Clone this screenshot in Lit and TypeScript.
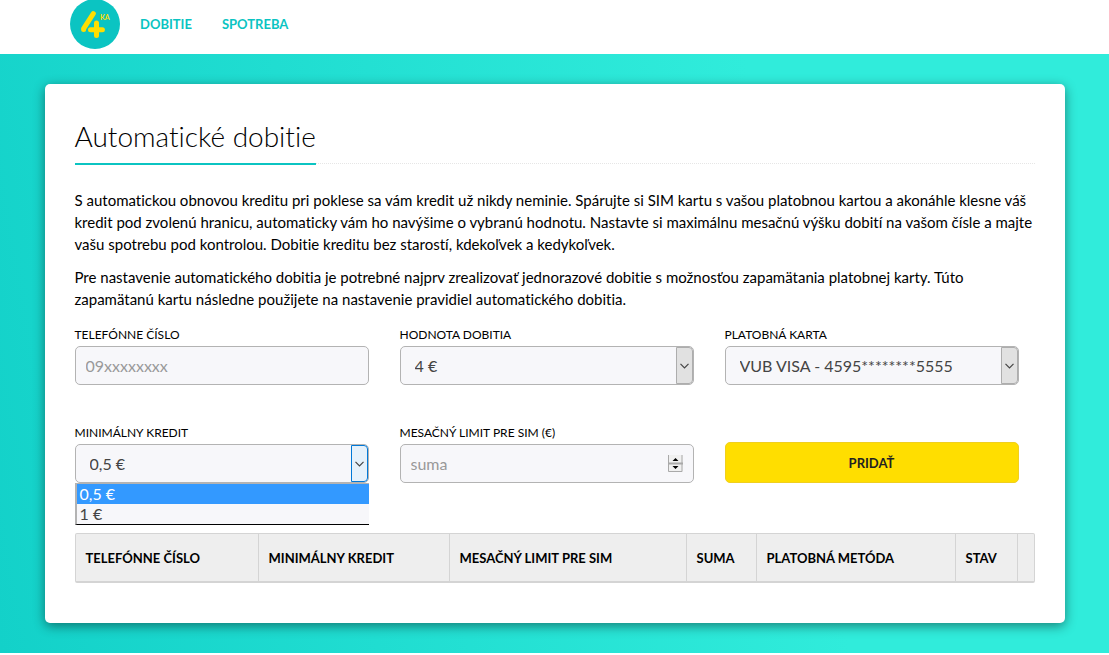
import { LitElement, html, css } from "lit";
import { customElement, state, property } from "lit/decorators.js";

const chevron = html`<svg width="9" height="6" viewBox="0 0 9 6" aria-hidden="true">
  <path d="M0.5 0.8 L4.5 4.8 L8.5 0.8" fill="none" stroke="currentColor" stroke-width="1.2" />
</svg>`;

@customElement("brand-logo")
class BrandLogo extends LitElement {
  static styles = css`
    :host { display: block; width: 50px; height: 50px; }
    svg { display: block; }
    .ka { font: 700 7px Lato, sans-serif; fill: #ffde00; }
  `;
  render() {
    return html`<svg width="50" height="50" viewBox="0 0 50 50" role="img" aria-label="4ka">
      <circle cx="25" cy="25" r="25" fill="#0bc4c2" />
      <g fill="none" stroke="#ffde00" stroke-width="5" stroke-linecap="round" stroke-linejoin="round">
        <path d="M23.3 14.6 L13.6 29.6 V30.6" />
        <path d="M20.5 30.8 H32.4" />
        <path d="M26.5 24 V36.6" />
      </g>
      <text class="ka" x="30" y="21">KA</text>
    </svg>`;
  }
}

@customElement("select-field")
class SelectField extends LitElement {
  @property() label = "";
  @property({ attribute: false }) options: string[] = [];
  @property({ type: Boolean, reflect: true }) open = false;
  @state() private chosen = 0;

  static styles = css`
    :host { display: block; }
    .label { display: block; font-size: 12px; line-height: 14px; margin-bottom: 4px; text-transform: uppercase; }
    .box { position: relative; }
    .select {
      appearance: none; box-sizing: border-box; display: block; width: 100%; height: 39px;
      padding: 0 26px 0 14px; border: 1px solid #b3b3b3; border-radius: 5px;
      background: #f7f7fa; color: #444; font: inherit; font-size: 16px; outline: none;
    }
    .arrow {
      position: absolute; top: 1px; right: 1px; bottom: 1px; width: 17px; box-sizing: border-box;
      display: grid; place-items: center; pointer-events: none;
      background: #e1e1e1; border: 1px solid #adadad; border-radius: 0 4px 4px 0; color: #444;
    }
    :host([open]) .arrow { background: #e5f1fb; border-color: #0078d7; }
    .list {
      position: absolute; z-index: 1; top: 100%; left: 0; right: 0; margin: 0; padding: 0; list-style: none;
      background: #f7f7fa; border: 0 solid #b3b3b3; border-left-width: 2px; border-top-width: 1px;
      border-bottom: 1px solid #000; color: #444; font-size: 16px; line-height: 20px;
    }
    .option { padding: 0 3px; }
    .option.active { background: #3399ff; color: #fff; }
  `;

  render() {
    return html`
      <label class="label" for="field">${this.label}</label>
      <div class="box">
        <select class="select" id="field" @change=${(e: Event) => (this.chosen = (e.target as HTMLSelectElement).selectedIndex)}>
          ${this.options.map((o, i) => html`<option ?selected=${i === this.chosen}>${o}</option>`)}
        </select>
        <span class="arrow">${chevron}</span>
        ${this.open
          ? html`<ul class="list" role="listbox" aria-label=${this.label}>
              ${this.options.map(
                (o, i) => html`<li
                  class="option ${i === this.chosen ? "active" : ""}"
                  role="option"
                  aria-selected=${i === this.chosen ? "true" : "false"}
                  @click=${() => { this.chosen = i; this.open = false; }}
                >${o}</li>`
              )}
            </ul>`
          : null}
      </div>
    `;
  }
}

@customElement("app-root")
class AppRoot extends LitElement {
  static styles = css`
    :host {
      display: block; font-family: Lato, "Open Sans", sans-serif; font-variant-ligatures: none;
      color: #000; background: #fff;
    }
    .header { height: 54px; box-sizing: border-box; padding: 0 70px; display: flex; align-items: flex-start; gap: 20px; }
    .logo { margin-top: -1px; }
    .nav { display: flex; gap: 30px; line-height: 20px; padding-top: 14px; font-size: 13px; font-weight: 700; }
    .nav a { color: #0bc4c2; text-decoration: none; }
    .page { padding: 30px 20px; background: linear-gradient(80deg, #13d1c9 0%, #30ecdb 70%); }
    .card {
      box-sizing: border-box; max-width: 1020px; margin: 0 auto; padding: 35px 30px 40px;
      background: #fff; border-radius: 5px; box-shadow: 0 3px 12px rgba(0, 0, 0, 0.45);
    }
    .heading { display: flex; border-bottom: 1px dotted #e6e6e6; margin-bottom: 25px; }
    .title {
      margin: 0 0 -2px; padding-bottom: 9px; border-bottom: 2px solid #0bc4c2;
      font-size: 28px; line-height: 35px; font-weight: 300;
    }
    .text { margin: 0 0 11px; font-size: 15px; line-height: 22px; }
    .form { display: grid; grid-template-columns: repeat(3, 1fr); gap: 41px 31px; padding-right: 16px; margin-top: 18px; }
    .label { display: block; font-size: 12px; line-height: 14px; margin-bottom: 4px; text-transform: uppercase; }
    .input {
      appearance: textfield; box-sizing: border-box; display: block; width: 100%; height: 39px; padding: 0 10px;
      border: 1px solid #b3b3b3; border-radius: 5px; background: #f7f7fa; color: #444;
      font: inherit; font-size: 16px; outline: none;
    }
    .input::placeholder { color: #999; opacity: 1; }
    .input::-webkit-inner-spin-button { appearance: none; }
    .box { position: relative; }
    .spinner { position: absolute; right: 11px; top: 11px; }
    .submit {
      align-self: end; height: 41px; border: 1px solid #f0cf1f; border-radius: 5px; background: #ffde00;
      color: #222; font: inherit; font-size: 13px; font-weight: 700; cursor: pointer;
    }
    .table {
      width: 100%; table-layout: fixed; border-collapse: separate; border-spacing: 0; margin-top: 50px;
      border: 1px solid #d4d4d4; border-bottom-width: 2px; border-radius: 2px; background: #eee;
    }
    .table th {
      box-sizing: border-box; height: 47px; padding: 0 10px; text-align: left; white-space: nowrap;
      font-size: 13px; font-weight: 700;
    }
    .table th + th, .table td { border-left: 1px solid #d4d4d4; }
    .table td { padding: 0; }
    .c1 { width: 182px; } .c2 { width: 191px; } .c3 { width: 237px; } .c4 { width: 70px; }
    .c5 { width: 199px; } .c6 { width: 62px; } .c7 { width: 17px; }
  `;

  render() {
    return html`
      <header class="header">
        <brand-logo class="logo"></brand-logo>
        <nav class="nav"><a href="#dobitie">DOBITIE</a><a href="#spotreba">SPOTREBA</a></nav>
      </header>
      <main class="page">
        <section class="card">
          <div class="heading"><h1 class="title">Automatické dobitie</h1></div>
          <p class="text">
            S automatickou obnovou kreditu pri poklese sa vám kredit už nikdy neminie. Spárujte si SIM kartu s vašou
            platobnou kartou a akonáhle klesne váš kredit pod zvolenú hranicu, automaticky vám ho navýšime o
            vybranú hodnotu. Nastavte si maximálnu mesačnú výšku dobití na vašom čísle a majte vašu spotrebu pod
            kontrolou. Dobitie kreditu bez starostí, kdekoľvek a kedykoľvek.
          </p>
          <p class="text">
            Pre nastavenie automatického dobitia je potrebné najprv zrealizovať jednorazové dobitie s možnosťou
            zapamätania platobnej karty. Túto<br />zapamätanú kartu následne použijete na nastavenie pravidiel
            automatického dobitia.
          </p>
          <form class="form" @submit=${(e: Event) => e.preventDefault()}>
            <div>
              <label class="label" for="phone">Telefónne číslo</label>
              <input class="input" id="phone" type="tel" placeholder="09xxxxxxxx" />
            </div>
            <select-field label="Hodnota dobitia" .options=${["4 €"]}></select-field>
            <select-field label="Platobná karta" .options=${["VUB VISA - 4595********5555"]}></select-field>
            <select-field label="Minimálny kredit" .options=${["0,5 €", "1 €"]} open></select-field>
            <div>
              <label class="label" for="limit">Mesačný limit pre SIM (€)</label>
              <div class="box">
                <input class="input" id="limit" type="number" placeholder="suma" />
                <svg class="spinner" width="15" height="17" viewBox="0 0 15 17" aria-hidden="true">
                  <path d="M0 0 H15 V17 H0 Z" fill="#f0f0f0" />
                  <path d="M0.5 0 V16.5 H14 V0" fill="none" stroke="#a9a9a9" />
                  <path d="M0 8.5 H15" stroke="#a9a9a9" stroke-width="2" />
                  <path d="M4.5 6 L7.5 3 L10.5 6 Z M4.5 11 L7.5 14 L10.5 11 Z" fill="#000" />
                </svg>
              </div>
            </div>
            <button class="submit" type="submit">PRIDAŤ</button>
          </form>
          <table class="table">
            <colgroup>
              <col class="c1" /><col class="c2" /><col class="c3" /><col class="c4" /><col class="c5" /><col class="c6" /><col class="c7" />
            </colgroup>
            <thead>
              <tr>
                <th scope="col">TELEFÓNNE ČÍSLO</th>
                <th scope="col">MINIMÁLNY KREDIT</th>
                <th scope="col">MESAČNÝ LIMIT PRE SIM</th>
                <th scope="col">SUMA</th>
                <th scope="col">PLATOBNÁ METÓDA</th>
                <th scope="col">STAV</th>
                <td></td>
              </tr>
            </thead>
          </table>
        </section>
      </main>
    `;
  }
}
